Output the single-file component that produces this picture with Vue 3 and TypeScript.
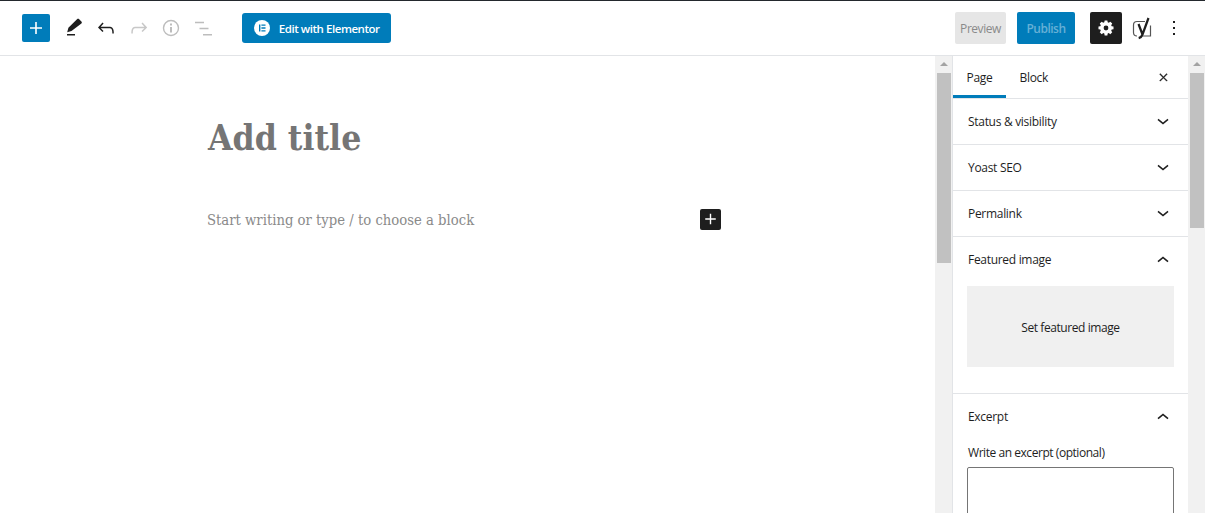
<script setup lang="ts">
const closedPanels: string[] = ['Status & visibility', 'Yoast SEO', 'Permalink']
</script>

<template>
  <div class="page">
    <header class="top">
      <div class="left">
        <button class="add" aria-label="Add block">
          <svg width="24" height="24" viewBox="0 0 24 24"><path d="M18 11.200h-5.200V6h-1.600v5.200H6v1.600h5.200V18h1.600v-5.200H18z" fill="#fff" /></svg>
        </button>
        <span class="tool first">
          <svg width="24" height="24" viewBox="0 0 24 24"><path d="M18.200 3.200l2.200 2.200c.6.6.6 1.400 0 2L10.500 15l-4.300 1.200 1.200-4.400L16 3.300c.6-.6 1.600-.6 2.200-.1zM6 18h8v1.500H6z" fill="#1e1e1e" /></svg>
        </span>
        <span class="tool">
          <svg width="24" height="24" viewBox="0 0 24 24"><path d="M18.300 11.700c-.6-.6-1.400-.9-2.300-.9H6.700l2.900-3.300-1.100-1-4.500 5L8.500 16l1-1-2.700-2.700H16c.5 0 .9.2 1.300.5 1 1 1 3.400 1 4.500v.3h1.500v-.2c0-1.500 0-4.300-1.500-5.700z" fill="#1e1e1e" /></svg>
        </span>
        <span class="tool">
          <svg width="24" height="24" viewBox="0 0 24 24"><path d="M15.600 6.500l-1.100 1 2.900 3.300H8c-.9 0-1.700.3-2.300.9-1.400 1.500-1.400 4.200-1.400 5.600v.2h1.500v-.3c0-1.100 0-3.500 1-4.500.3-.3.7-.5 1.300-.5h9.200L14.500 15l1.100 1.100 4.600-4.600-4.600-5z" fill="#c8c8c8" /></svg>
        </span>
        <span class="tool">
          <svg width="24" height="24" viewBox="0 0 24 24"><path d="M12 3.800a8.200 8.200 0 1 0 0 16.400 8.200 8.200 0 0 0 0-16.400zm0 15a6.800 6.800 0 1 1 0-13.600 6.800 6.800 0 0 1 0 13.600zM11 7.500h2v2h-2zM11 11h2v5.500h-2z" fill="#bdbdbd" /></svg>
        </span>
        <span class="tool">
          <svg width="24" height="24" viewBox="0 0 24 24"><path d="M3 5.700h9v1.500H3zM7.500 11.700h9v1.500h-9zM11 18h9v1.500h-9z" fill="#bdbdbd" /></svg>
        </span>
        <button class="elementor">
          <svg width="18" height="18" viewBox="0 0 18 18">
            <circle cx="9" cy="9" r="8" fill="#fff" />
            <path d="M6 5.500h1.400v7H6zM8.400 5.500h4.100v1.300H8.400zM8.400 8.300h4.100v1.400H8.400zM8.400 11.200h4.100v1.300H8.400z" fill="#007cba" />
          </svg>
          <span>Edit with Elementor</span>
        </button>
      </div>
      <div class="right">
        <button class="preview">Preview</button>
        <button class="publish">Publish</button>
        <button class="settings" aria-label="Settings">
          <svg width="24" height="24" viewBox="0 0 24 24"><path fill-rule="evenodd" d="M10.300 4h3.400l.4 2.300 1.300.6 2-1.300 2.400 2.400-1.300 2 .6 1.300 2.300.4v3.400l-2.300.4-.6 1.300 1.300 2-2.400 2.400-2-1.300-1.300.6-.4 2.300h-3.400l-.4-2.300-1.300-.6-2 1.300-2.400-2.400 1.300-2-.6-1.300-2.300-.4v-3.400l2.300-.4.6-1.300-1.300-2 2.400-2.400 2 1.300 1.300-.6zM12 10.500a3 3 0 1 0 0 6 3 3 0 0 0 0-6z" fill="#fff" transform="translate(2.400 1.200) scale(.8)" /></svg>
        </button>
        <span class="yoast">
          <svg width="24" height="24" viewBox="0 0 24 24">
            <path d="M15 5.500H7A3.500 3.500 0 0 0 3.500 9v7.500A3.500 3.500 0 0 0 7 20M20.500 9.500V20H11" fill="none" stroke="#555" stroke-width="1.200" />
            <path d="M8.500 8l4 10.500M18.500 2l-6 16.500c-.7 1.900-1.800 3.100-3.800 3.600" fill="none" stroke="#1e1e1e" stroke-width="2.200" />
          </svg>
        </span>
        <span class="more">
          <svg width="24" height="24" viewBox="0 0 24 24"><path d="M13 19h-2v-2h2v2zm0-6h-2v-2h2v2zm0-6h-2V5h2v2z" fill="#1e1e1e" /></svg>
        </span>
      </div>
    </header>

    <div class="body">
      <main class="editor">
        <div class="column">
          <h1 class="title">Add title</h1>
          <div class="para">
            <span>Start writing or type / to choose a block</span>
            <button class="inline-add" aria-label="Add block">
              <svg width="22" height="22" viewBox="0 0 24 24"><path d="M18 11.200h-5.200V6h-1.600v5.200H6v1.600h5.200V18h1.600v-5.200H18z" fill="#fff" /></svg>
            </button>
          </div>
        </div>
      </main>
      <div class="scrollbar">
        <i class="arrow"></i>
        <i class="thumb thumb-a"></i>
      </div>
      <aside class="sidebar">
        <div class="tabs">
          <span class="tab active">Page</span>
          <span class="tab">Block</span>
          <svg class="close" width="15" height="15" viewBox="0 0 24 24"><path d="M13 11.800l5-5-1.100-1.100-5 5-5-5-1.100 1.100 5 5-5 5 1.100 1.100 5-5 5 5 1.100-1.100z" fill="#1e1e1e" stroke="#1e1e1e" stroke-width=".6" /></svg>
        </div>
        <section v-for="p in closedPanels" :key="p" class="panel">
          <h2 class="phead">
            <span>{{ p }}</span>
            <svg width="24" height="24" viewBox="0 0 24 24"><path d="M17.500 9.900L12 14.600 6.500 9.900l1-1.100 4.500 3.800 4.500-3.800z" fill="#1e1e1e" /></svg>
          </h2>
        </section>
        <section class="panel featured">
          <h2 class="phead">
            <span>Featured image</span>
            <svg width="24" height="24" viewBox="0 0 24 24"><path d="M6.500 13.100L12 8.400l5.500 4.700-1 1.100-4.500-3.800-4.500 3.800z" fill="#1e1e1e" /></svg>
          </h2>
          <div class="setimg">Set featured image</div>
        </section>
        <section class="panel excerpt">
          <h2 class="phead">
            <span>Excerpt</span>
            <svg width="24" height="24" viewBox="0 0 24 24"><path d="M6.500 13.100L12 8.400l5.500 4.700-1 1.100-4.500-3.800-4.500 3.800z" fill="#1e1e1e" /></svg>
          </h2>
          <label class="lbl">Write an excerpt (optional)</label>
          <div class="area"></div>
        </section>
      </aside>
      <div class="scrollbar">
        <i class="arrow"></i>
        <i class="thumb thumb-b"></i>
      </div>
    </div>
  </div>
</template>

<style>
html, body { margin: 0; padding: 0; background: #fff; overflow: hidden; }
</style>

<style scoped>
.page {
  width: 1205px;
  height: 513px;
  overflow: hidden;
  display: flex;
  flex-direction: column;
  font-family: "Open Sans", "Noto Sans", sans-serif;
  color: #1e1e1e;
  border-top: 1px solid #23282d;
  box-sizing: border-box;
}
button { border: 0; padding: 0; margin: 0; font: inherit; }
.top {
  height: 55px;
  flex: none;
  box-sizing: border-box;
  border-bottom: 1px solid #e2e4e7;
  display: flex;
  justify-content: space-between;
  align-items: center;
  padding: 0 19px 0 22px;
}
.left, .right { display: flex; align-items: center; }
.add {
  width: 28px;
  height: 28px;
  border-radius: 2px;
  background: #007cba;
  display: flex;
  align-items: center;
  justify-content: center;
}
.tool { width: 32.75px; height: 28px; display: flex; align-items: center; justify-content: center; }
.tool.first { margin-left: 6.75px; }
.elementor {
  margin-left: 21.25px;
  height: 30px;
  width: 149px;
  border-radius: 3px;
  background: #007cba;
  color: #fff;
  display: flex;
  align-items: center;
  padding-left: 11px;
  gap: 8px;
  box-sizing: border-box;
  font-size: 11.5px;
  font-weight: 600;
  letter-spacing: -0.45px;
  white-space: nowrap;
}
.preview {
  width: 51px;
  height: 32px;
  background: #e6e6e6;
  color: #8a8a8a;
  font-size: 12px;
  letter-spacing: -0.45px;
  border-radius: 2px;
}
.publish {
  margin-left: 11px;
  width: 58px;
  height: 32px;
  background: #007cba;
  color: #66b0d6;
  font-size: 12px;
  font-weight: 600;
  letter-spacing: -0.5px;
  border-radius: 2px;
}
.settings {
  margin-left: 15px;
  width: 32px;
  height: 32px;
  background: #1e1e1e;
  border-radius: 2px;
  display: flex;
  align-items: center;
  justify-content: center;
}
.yoast { margin-left: 6px; width: 28px; display: flex; justify-content: center; }
.more { margin-left: 6px; width: 24px; display: flex; justify-content: center; }
.body { flex: 1; display: flex; min-height: 0; }
.editor { flex: 1; min-width: 0; }
.column { padding: 61px 0 0 207px; width: 514px; }
.title {
  margin: 0 0 0 1px;
  font-family: "DejaVu Serif Condensed", "DejaVu Serif", serif;
  font-size: 35.2px;
  font-weight: 700;
  line-height: 42px;
  color: #757575;
}
.para {
  margin-top: 48px;
  display: flex;
  align-items: center;
  justify-content: space-between;
  height: 24px;
  font-family: "DejaVu Serif Condensed", "DejaVu Serif", serif;
  font-size: 14.7px;
  color: #8a8a8a;
}
.inline-add {
  width: 21px;
  height: 21px;
  background: #1e1e1e;
  border-radius: 2px;
  display: flex;
  align-items: center;
  justify-content: center;
}
.scrollbar {
  width: 17px;
  flex: none;
  background: #f1f1f1;
  display: flex;
  flex-direction: column;
  align-items: center;
}
.arrow {
  margin-top: 6px;
  width: 0;
  height: 0;
  border-left: 4px solid transparent;
  border-right: 4px solid transparent;
  border-bottom: 4px solid #a3a3a3;
}
.thumb { display: block; width: 14px; background: #c1c1c1; margin-top: 7px; }
.thumb-a { height: 190px; }
.thumb-b { height: 155px; }
.sidebar {
  width: 236px;
  flex: none;
  box-sizing: border-box;
  border-left: 1px solid #e2e4e7;
  overflow: hidden;
  font-size: 12px;
  letter-spacing: -0.3px;
}
.tabs {
  height: 43px;
  box-sizing: border-box;
  border-bottom: 1px solid #e2e4e7;
  display: flex;
  align-items: stretch;
  position: relative;
}
.tab {
  padding: 1px 13.5px 0;
  line-height: 42px;
  height: 42px;
  box-sizing: border-box;
}
.tab.active { box-shadow: inset 0 -3px 0 #007cba; }
.close { position: absolute; right: 17px; top: 14px; }
.panel { border-bottom: 1px solid #e2e4e7; }
.phead {
  margin: 0;
  height: 45px;
  display: flex;
  align-items: center;
  justify-content: space-between;
  padding: 0 13px 0 15px;
  font-size: 12px;
  font-weight: 400;
}
.featured { height: 157px; box-sizing: border-box; }
.setimg {
  margin: 4px 14px 0;
  height: 81px;
  padding-top: 1px;
  box-sizing: border-box;
  background: #f0f0f0;
  display: flex;
  align-items: center;
  justify-content: center;
  letter-spacing: -0.42px;
}
.lbl { display: block; margin: 5px 15px 0; line-height: 18px; letter-spacing: -0.45px; }
.area {
  margin: 5px 14px 0;
  height: 80px;
  box-sizing: border-box;
  border: 1px solid #757575;
  border-radius: 2px;
}
</style>
